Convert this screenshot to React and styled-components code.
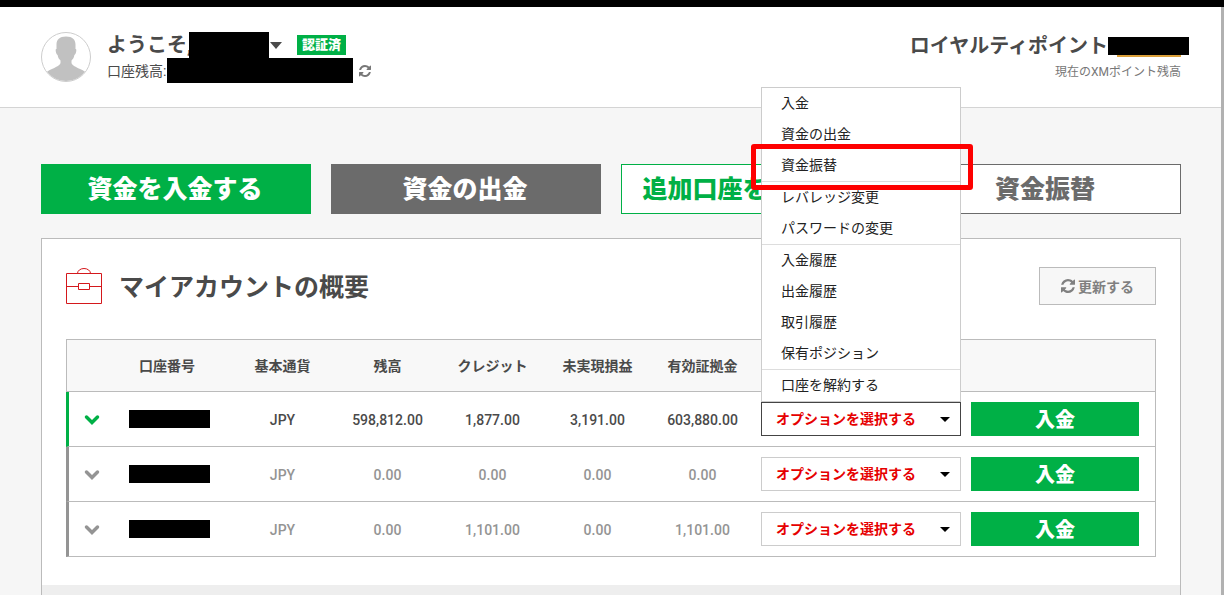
import React from "react";
import styled, { createGlobalStyle } from "styled-components";

const color = {
  green: "#00b046",
  grey: "#6b6b6b",
  text: "#4a4a4a",
  muted: "#949494",
  line: "#bbbbbb",
  red: "#e60000",
};

const GlobalStyle = createGlobalStyle`
  *, *::before, *::after { box-sizing: border-box; }
  body {
    margin: 0;
    background: #f6f6f6;
    color: ${color.text};
    font-family: Roboto, "Noto Sans CJK JP", sans-serif;
    font-size: 14px;
    line-height: 20px;
  }
  button, select { font-family: inherit; margin: 0; }
`;

const Page = styled.div`
  min-height: 100vh;
  display: flex;
  flex-direction: column;
  border-right: 3px solid #b1b1b1;
`;

const TopBar = styled.div`
  height: 7px;
  background: #000;
`;

const Header = styled.header`
  display: flex;
  justify-content: space-between;
  align-items: flex-start;
  height: 101px;
  padding: 25px 40px 0 41px;
  background: #fff;
  border-bottom: 1px solid #d4d4d4;
`;

const Profile = styled.div`
  display: flex;
  gap: 16px;
`;

const Avatar = styled.svg`
  width: 50px;
  height: 50px;
`;

const ProfileLine = styled.div`
  display: flex;
  align-items: center;
  height: ${(p) => p.$height}px;
`;

const Welcome = styled.button`
  display: flex;
  align-items: center;
  height: 26px;
  padding: 0;
  border: 0;
  background: none;
  color: ${color.text};
  font-size: 20px;
  font-weight: 700;
`;

const WelcomeText = styled.span`
  width: 82px;
  padding-bottom: 4px;
  white-space: nowrap;
  text-align: left;
`;

const Redacted = styled.span`
  display: inline-block;
  flex: none;
  vertical-align: middle;
  width: ${(p) => p.$width}px;
  height: ${(p) => p.$height}px;
  background: #000;
`;

const Caret = styled.svg`
  width: 12px;
  height: 7px;
  margin-left: 1px;
`;

const Badge = styled.span`
  height: 20px;
  margin-left: 15px;
  padding: 0 5px;
  background: ${color.green};
  color: #fff;
  font-size: 13px;
  font-weight: 900;
`;

const BalanceLabel = styled.span`
  width: 60px;
  white-space: nowrap;
`;

const IconButton = styled.button`
  display: flex;
  padding: 0;
  margin-left: 6px;
  border: 0;
  background: none;
  color: #777;
`;

const RefreshSvg = styled.svg`
  flex: none;
  fill: currentColor;
`;

const Loyalty = styled.div`
  display: flex;
  flex-direction: column;
  align-items: flex-end;
  padding-top: 4px;
`;

const LoyaltyTitle = styled.div`
  display: flex;
  align-items: center;
  height: 20px;
  font-size: 20px;
  font-weight: 700;
`;

const PointsLink = styled.a`
  position: relative;
  display: flex;
  margin-right: -8px;

  &::after {
    content: "";
    position: absolute;
    right: 8px;
    top: 100%;
    width: 64px;
    height: 2px;
    background: #dba03a;
  }
`;

const LoyaltyNote = styled.div`
  margin-top: 6px;
  font-size: 12px;
  color: #777;
`;

const Main = styled.main`
  flex: 1;
  display: flex;
  flex-direction: column;
  padding: 56px 40px 0 41px;
`;

const Actions = styled.nav`
  display: grid;
  grid-template-columns: repeat(4, 1fr);
  gap: 20px;
`;

const ActionButton = styled.button`
  height: 50px;
  padding: 0 2px 4px 0;
  border: 1px solid ${(p) => p.$tone};
  background: ${(p) => (p.$filled ? p.$tone : "#fff")};
  color: ${(p) => (p.$filled ? "#fff" : p.$tone)};
  font-size: 25px;
  font-weight: 900;
  white-space: nowrap;
`;

const Panel = styled.section`
  flex: 1;
  display: flex;
  flex-direction: column;
  margin-top: 24px;
  border: 1px solid ${color.line};
  border-bottom: 0;
  background: #fff;
`;

const PanelBody = styled.div`
  padding: 28px 24px;
`;

const PanelFooter = styled.div`
  flex: 1;
  background: #eee;
`;

const PanelHead = styled.div`
  display: flex;
  align-items: center;
  height: 38px;
  margin-bottom: 34px;
`;

const Title = styled.h1`
  flex: 1;
  margin: 0 0 0 17px;
  padding-top: 4px;
  font-size: 25px;
  line-height: 36px;
  font-weight: 700;
`;

const UpdateButton = styled.button`
  display: flex;
  align-items: center;
  justify-content: center;
  gap: 3px;
  width: 117px;
  height: 38px;
  padding: 0;
  border: 1px solid ${color.line};
  background: #f7f7f7;
  color: #808080;
  font-size: 14px;
  font-weight: 700;
`;

const Table = styled.table`
  width: 100%;
  table-layout: fixed;
  border-collapse: separate;
  border-spacing: 0;
  text-align: center;
`;

const HeadCell = styled.th`
  height: 53px;
  padding: 0;
  border: solid ${color.line};
  border-width: 1px 0;
  background: #f8f8f8;
  font-weight: 700;
  white-space: nowrap;

  &:first-child { border-left-width: 1px; }
  &:last-child { border-right-width: 1px; }
`;

const Row = styled.tr`
  color: ${(p) => (p.$active ? color.text : color.muted)};
`;

const Cell = styled.td`
  height: 55px;
  padding: 2px 0 0;
  border: 0 solid ${color.line};
  border-bottom-width: 1px;
  font-weight: 500;
`;

const NumberCell = styled(Cell)`
  padding: 0 0 2px 4px;
`;

const ToggleCell = styled(Cell)`
  padding: 4px 0 0 15px;
  border-left: 3px solid ${(p) => (p.$active ? color.green : color.muted)};
  text-align: left;
`;

const ToggleButton = styled.button`
  display: block;
  padding: 0;
  border: 0;
  background: none;
  color: ${(p) => (p.$active ? color.green : color.muted)};
`;

const OptionCell = styled(Cell)`
  padding: 0 5px 0 6px;
`;

const DepositCell = styled(Cell)`
  padding: 0 16px 0 5px;
  border-right-width: 1px;
`;

const DepositButton = styled.button`
  display: block;
  width: 100%;
  height: 34px;
  padding: 0 0 2px;
  border: 0;
  background: ${color.green};
  color: #fff;
  font-size: 20px;
  font-weight: 900;
`;

const OptionBox = styled.div`
  position: relative;
`;

const OptionSelect = styled.select`
  display: block;
  width: 100%;
  height: 34px;
  padding: 0 14px;
  appearance: none;
  border: 1px solid ${(p) => (p.$open ? "#444" : "#ccc")};
  border-radius: 0;
  background: #fff;
  color: ${color.red};
  font-size: 14px;
  font-weight: 700;
`;

const SelectArrow = styled.svg`
  position: absolute;
  top: 15px;
  right: 11px;
  width: 10px;
  height: 5px;
  pointer-events: none;
`;

const Menu = styled.ul`
  position: absolute;
  z-index: 2;
  left: 0;
  right: 0;
  bottom: 100%;
  margin: 0;
  padding: 0;
  list-style: none;
  border: 1px solid #ccc;
  background: #fff;
`;

const MenuItem = styled.li`
  position: relative;
  border-top: ${(p) => (p.$divided ? "1px solid #ddd" : "0")};
`;

const MenuButton = styled.button`
  display: block;
  width: 100%;
  height: 31px;
  padding: 0 20px 3px 19px;
  border: 0;
  background: none;
  color: #222;
  font-size: 14px;
  text-align: left;
`;

const Highlight = styled.span`
  position: absolute;
  z-index: 1;
  inset: -6px -13px -9px -11px;
  border: 5px solid #fe0000;
  border-radius: 3px;
  pointer-events: none;
`;

const RefreshIcon = ({ size }) => (
  <RefreshSvg width={size} height={size} viewBox="0 128 1536 1536" aria-hidden="true">
    <path d="M1511 1056q0 5-1 7-64 268-268 434.500t-478 166.500q-146 0-282.500-55t-243.500-157l-129 129q-19 19-45 19t-45-19-19-45v-448q0-26 19-45t45-19h448q26 0 45 19t19 45-19 45l-137 137q71 66 161 102t187 36q134 0 250-65t186-179q11-17 53-117 8-23 30-23h192q13 0 22.500 9.500t9.500 22.500zm25-800v448q0 26-19 45t-45 19h-448q-26 0-45-19t-19-45 19-45l138-138q-148-137-349-137-134 0-250 65t-186 179q-11 17-53 117-8 23-30 23h-199q-13 0-22.500-9.500t-9.500-22.500v-7q65-268 270-434.500t480-166.500q146 0 284 55.500t245 156.500l130-129q19-19 45-19t45 19 19 45z" />
  </RefreshSvg>
);

const UserPortrait = () => (
  <Avatar viewBox="0 0 50 50" aria-hidden="true">
    <defs>
      <clipPath id="portrait">
        <circle cx="25" cy="25" r="24" />
      </clipPath>
    </defs>
    <circle cx="25" cy="25" r="24.500" fill="#fff" stroke="#cdcdcd" />
    <path
      clipPath="url(#portrait)"
      fill="#c1c1c1"
      d="M25 4.500c6.500 0 9.500 3 9.500 8v4.500c1 0 .9 1.200.7 2.500-.3 1.800-.9 3-1.800 3.500-.5 2.500-1.200 4-2.900 5.500v2.500c.8 2.500 4.500 4 8 5.800 4 2 7 3 9 6.700v8h-45v-8c2-3.700 5-4.700 9-6.700 3.500-1.800 7.200-3.300 8-5.800v-2.500c-1.700-1.500-2.400-3-2.900-5.500-.9-.5-1.500-1.700-1.800-3.500-.2-1.300-.3-2.500.7-2.500v-4.500c0-5 3-8 9.500-8z"
    />
  </Avatar>
);

const Briefcase = () => (
  <svg width="36" height="37" viewBox="0 0 36 37" fill="none" stroke="#d4181c" aria-hidden="true">
    <path d="M.5 5.500h35v30H.5zM.5 18.500h12M24 18.500h11.500M12.500 15.500h11v6h-11zM11.500 5.500a6.500 5 0 0 1 13 0" />
  </svg>
);

const Chevron = () => (
  <svg width="16" height="12" viewBox="0 0 16 12" fill="none" aria-hidden="true">
    <path d="M2.500 3 8 8.500 13.500 3" stroke="currentColor" strokeWidth="3.500" strokeLinecap="round" />
  </svg>
);

const menuItems = [
  { label: "入金" },
  { label: "資金の出金" },
  { label: "資金振替", highlighted: true },
  { label: "レバレッジ変更", divided: true },
  { label: "パスワードの変更" },
  { label: "入金履歴", divided: true },
  { label: "出金履歴" },
  { label: "取引履歴" },
  { label: "保有ポジション" },
  { label: "口座を解約する", divided: true },
];

const columns = [
  { label: "", width: 38 },
  { label: "口座番号", width: 126 },
  { label: "基本通貨", width: 105 },
  { label: "残高", width: 105 },
  { label: "クレジット", width: 105 },
  { label: "未実現損益", width: 105 },
  { label: "有効証拠金", width: 105 },
  { label: "", width: 211 },
  { label: "", width: 190 },
];

const accounts = [
  { active: true, values: ["JPY", "598,812.00", "1,877.00", "3,191.00", "603,880.00"] },
  { active: false, values: ["JPY", "0.00", "0.00", "0.00", "0.00"] },
  { active: false, values: ["JPY", "0.00", "1,101.00", "0.00", "1,101.00"] },
];

const OptionPicker = ({ open }) => (
  <OptionBox>
    {open && (
      <Menu>
        {menuItems.map((item) => (
          <MenuItem key={item.label} $divided={item.divided}>
            <MenuButton type="button">{item.label}</MenuButton>
            {item.highlighted && <Highlight />}
          </MenuItem>
        ))}
      </Menu>
    )}
    <OptionSelect $open={open} aria-label="オプションを選択する">
      <option>オプションを選択する</option>
    </OptionSelect>
    <SelectArrow viewBox="0 0 10 5" aria-hidden="true">
      <path d="M0 0h10L5 5z" />
    </SelectArrow>
  </OptionBox>
);

const AccountRow = ({ account }) => (
  <Row $active={account.active}>
    <ToggleCell $active={account.active}>
      <ToggleButton type="button" $active={account.active} aria-label="詳細">
        <Chevron />
      </ToggleButton>
    </ToggleCell>
    <NumberCell>
      <Redacted $width={81} $height={18} />
    </NumberCell>
    {account.values.map((value, i) => (
      <Cell key={i}>{value}</Cell>
    ))}
    <OptionCell>
      <OptionPicker open={account.active} />
    </OptionCell>
    <DepositCell>
      <DepositButton type="button">入金</DepositButton>
    </DepositCell>
  </Row>
);

export default function App() {
  return (
    <>
      <GlobalStyle />
      <TopBar />
      <Page>
        <Header>
          <Profile>
            <UserPortrait />
            <div>
              <ProfileLine $height={26}>
                <Welcome type="button">
                  <WelcomeText>ようこそ,</WelcomeText>
                  <Redacted $width={80} $height={26} />
                  <Caret viewBox="0 0 12 7" aria-hidden="true">
                    <path d="M0 0h12L6 7z" fill={color.text} />
                  </Caret>
                </Welcome>
                <Badge>認証済</Badge>
              </ProfileLine>
              <ProfileLine $height={25}>
                <BalanceLabel>口座残高:</BalanceLabel>
                <Redacted $width={186} $height={25} />
                <IconButton type="button" aria-label="更新">
                  <RefreshIcon size={12} />
                </IconButton>
              </ProfileLine>
            </div>
          </Profile>
          <Loyalty>
            <LoyaltyTitle>
              ロイヤルティポイント
              <PointsLink href="#points" aria-label="ポイント">
                <Redacted $width={81} $height={18} />
              </PointsLink>
            </LoyaltyTitle>
            <LoyaltyNote>現在のXMポイント残高</LoyaltyNote>
          </Loyalty>
        </Header>
        <Main>
          <Actions>
            <ActionButton type="button" $filled $tone={color.green}>資金を入金する</ActionButton>
            <ActionButton type="button" $filled $tone={color.grey}>資金の出金</ActionButton>
            <ActionButton type="button" $tone={color.green}>追加口座を開設する</ActionButton>
            <ActionButton type="button" $tone={color.grey}>資金振替</ActionButton>
          </Actions>
          <Panel>
            <PanelBody>
              <PanelHead>
                <Briefcase />
                <Title>マイアカウントの概要</Title>
                <UpdateButton type="button">
                  <RefreshIcon size={14} />
                  更新する
                </UpdateButton>
              </PanelHead>
              <Table>
                <colgroup>
                  {columns.map((column, i) => (
                    <col key={i} width={column.width} />
                  ))}
                </colgroup>
                <thead>
                  <tr>
                    {columns.map((column, i) => (
                      <HeadCell key={i} scope="col">{column.label}</HeadCell>
                    ))}
                  </tr>
                </thead>
                <tbody>
                  {accounts.map((account, i) => (
                    <AccountRow key={i} account={account} />
                  ))}
                </tbody>
              </Table>
            </PanelBody>
            <PanelFooter />
          </Panel>
        </Main>
      </Page>
    </>
  );
}
